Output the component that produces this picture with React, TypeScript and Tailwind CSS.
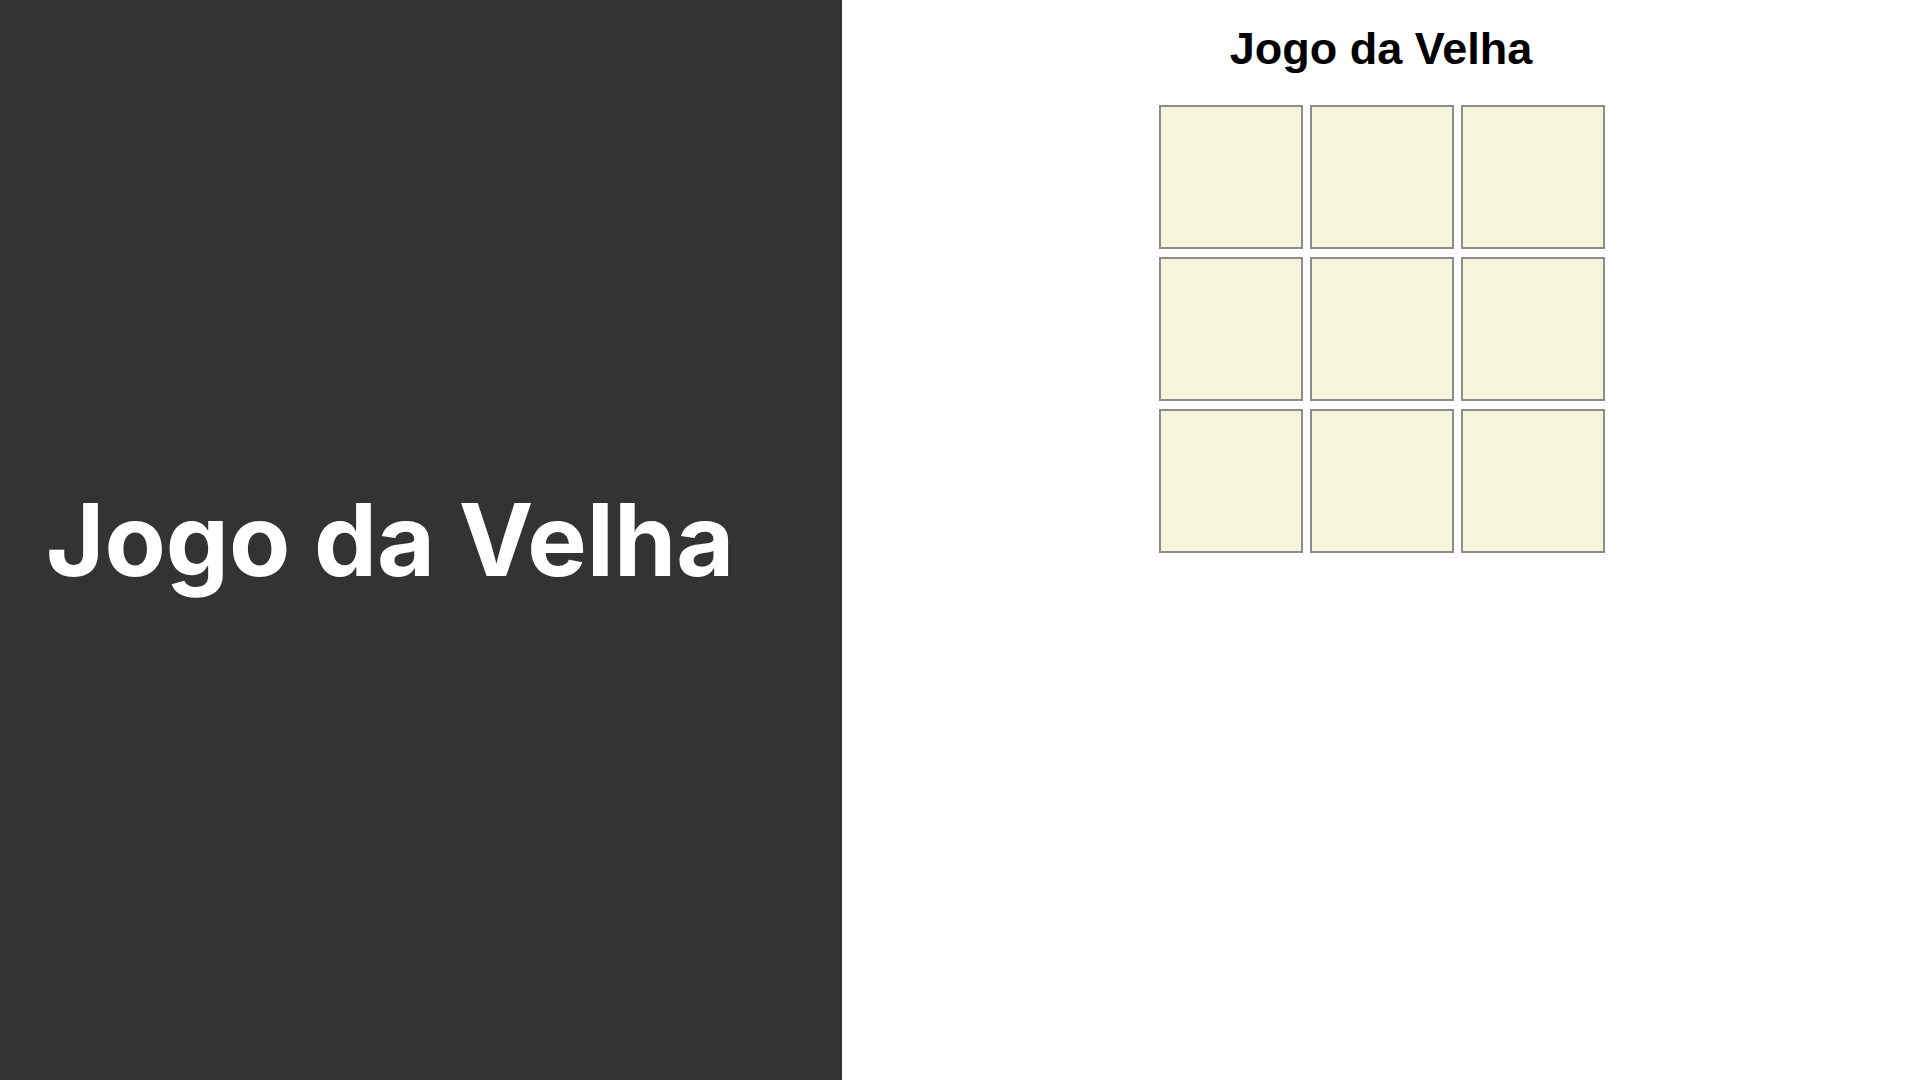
import React from 'react';

const cells = Array.from({ length: 9 }, (_, i) => i);

export default function App() {
  return (
    <div className="flex h-screen w-full" style={{ fontFamily: 'Inter, "Liberation Sans", sans-serif' }}>
      <div className="flex w-[842px] shrink-0 items-center bg-[#333333] pl-[46px]">
        <h1 className="text-[100px] font-bold leading-none text-white">
          Jogo da Velha
        </h1>
      </div>
      <div className="flex flex-1 flex-col items-center bg-white">
        <h2
          className="mt-[23px] text-[45px] font-bold leading-[52px] text-black"
          style={{ fontFamily: '"Liberation Sans", Arial, sans-serif' }}
        >
          Jogo da Velha
        </h2>
        <div className="mt-[30px] ml-[2px] grid grid-cols-[144px_144px_144px] gap-x-[7px] gap-y-2">
          {cells.map(i => (
            <button
              key={i}
              type="button"
              className="h-[144px] w-[144px] border-2 border-[#8c8c8c] bg-[#f5f5dc]"
            />
          ))}
        </div>
      </div>
    </div>
  );
}
